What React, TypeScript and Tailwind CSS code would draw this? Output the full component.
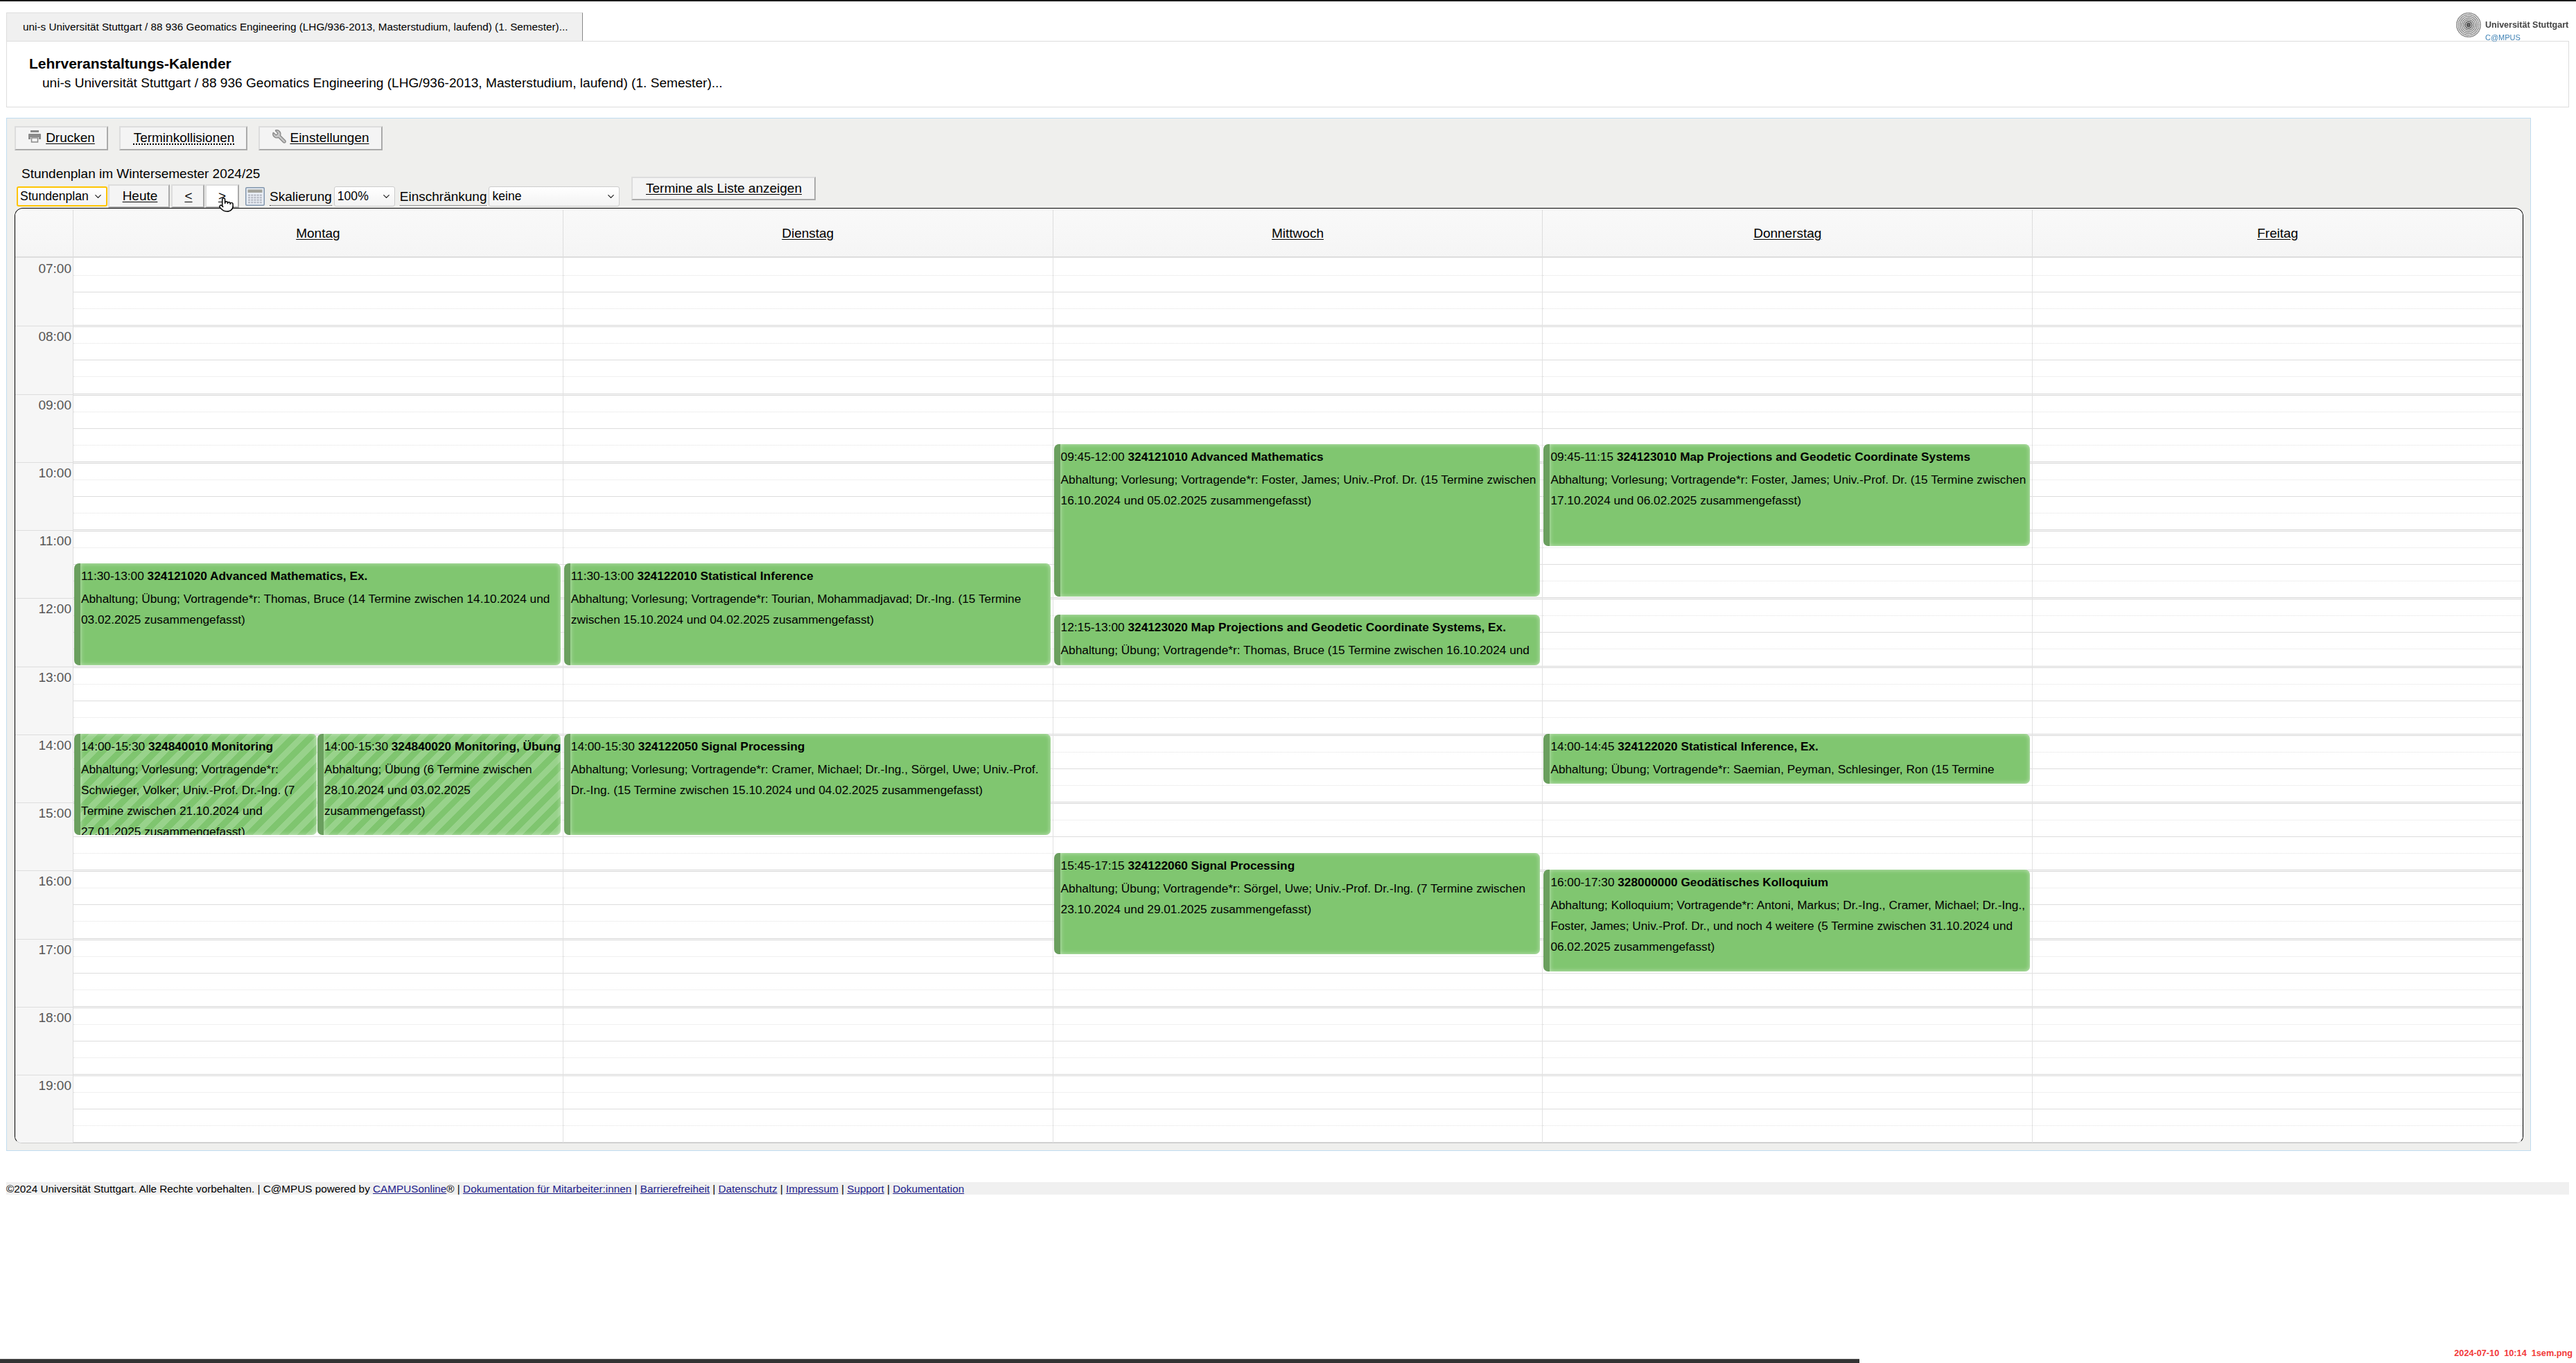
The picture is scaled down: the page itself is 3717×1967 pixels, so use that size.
import React from "react";
import { ChevronDown, Pointer, Wrench } from "lucide-react";

/* =====================================================
   DATA
===================================================== */
const HOUR = 98.25;
const hours = ["07:00", "08:00", "09:00", "10:00", "11:00", "12:00", "13:00", "14:00", "15:00", "16:00", "17:00", "18:00", "19:00"];
const days = ["Montag", "Dienstag", "Mittwoch", "Donnerstag", "Freitag"];

type CalEvent = {
  day: number;
  start: number;
  end: number;
  time: string;
  title: string;
  text: string;
  slot?: number;
  slots?: number;
  hatched?: boolean;
};

const events: CalEvent[] = [
  { day: 0, start: 11.5, end: 13, time: "11:30-13:00", title: "324121020 Advanced Mathematics, Ex.", text: "Abhaltung; Übung; Vortragende*r: Thomas, Bruce (14 Termine zwischen 14.10.2024 und 03.02.2025 zusammengefasst)" },
  { day: 0, start: 14, end: 15.5, time: "14:00-15:30", title: "324840010 Monitoring", text: "Abhaltung; Vorlesung; Vortragende*r: Schwieger, Volker; Univ.-Prof. Dr.-Ing. (7 Termine zwischen 21.10.2024 und 27.01.2025 zusammengefasst)", slot: 0, slots: 2, hatched: true },
  { day: 0, start: 14, end: 15.5, time: "14:00-15:30", title: "324840020 Monitoring, Übung", text: "Abhaltung; Übung (6 Termine zwischen 28.10.2024 und 03.02.2025 zusammengefasst)", slot: 1, slots: 2, hatched: true },
  { day: 1, start: 11.5, end: 13, time: "11:30-13:00", title: "324122010 Statistical Inference", text: "Abhaltung; Vorlesung; Vortragende*r: Tourian, Mohammadjavad; Dr.-Ing. (15 Termine zwischen 15.10.2024 und 04.02.2025 zusammengefasst)" },
  { day: 1, start: 14, end: 15.5, time: "14:00-15:30", title: "324122050 Signal Processing", text: "Abhaltung; Vorlesung; Vortragende*r: Cramer, Michael; Dr.-Ing., Sörgel, Uwe; Univ.-Prof. Dr.-Ing. (15 Termine zwischen 15.10.2024 und 04.02.2025 zusammengefasst)" },
  { day: 2, start: 9.75, end: 12, time: "09:45-12:00", title: "324121010 Advanced Mathematics", text: "Abhaltung; Vorlesung; Vortragende*r: Foster, James; Univ.-Prof. Dr. (15 Termine zwischen 16.10.2024 und 05.02.2025 zusammengefasst)" },
  { day: 2, start: 12.25, end: 13, time: "12:15-13:00", title: "324123020 Map Projections and Geodetic Coordinate Systems, Ex.", text: "Abhaltung; Übung; Vortragende*r: Thomas, Bruce (15 Termine zwischen 16.10.2024 und 05.02.2025 zusammengefasst)" },
  { day: 2, start: 15.75, end: 17.25, time: "15:45-17:15", title: "324122060 Signal Processing", text: "Abhaltung; Übung; Vortragende*r: Sörgel, Uwe; Univ.-Prof. Dr.-Ing. (7 Termine zwischen 23.10.2024 und 29.01.2025 zusammengefasst)" },
  { day: 3, start: 9.75, end: 11.25, time: "09:45-11:15", title: "324123010 Map Projections and Geodetic Coordinate Systems", text: "Abhaltung; Vorlesung; Vortragende*r: Foster, James; Univ.-Prof. Dr. (15 Termine zwischen 17.10.2024 und 06.02.2025 zusammengefasst)" },
  { day: 3, start: 14, end: 14.75, time: "14:00-14:45", title: "324122020 Statistical Inference, Ex.", text: "Abhaltung; Übung; Vortragende*r: Saemian, Peyman, Schlesinger, Ron (15 Termine zwischen 17.10.2024 und 06.02.2025 zusammengefasst)" },
  { day: 3, start: 16, end: 17.5, time: "16:00-17:30", title: "328000000 Geodätisches Kolloquium", text: "Abhaltung; Kolloquium; Vortragende*r: Antoni, Markus; Dr.-Ing., Cramer, Michael; Dr.-Ing., Foster, James; Univ.-Prof. Dr., und noch 4 weitere (5 Termine zwischen 31.10.2024 und 06.02.2025 zusammengefasst)" },
];

const footerLinks = ["Dokumentation für Mitarbeiter:innen", "Barrierefreiheit", "Datenschutz", "Impressum", "Support", "Dokumentation"];

/* =====================================================
   SMALL COMPONENTS
===================================================== */
const LogoDots = () => {
  const dots: React.ReactNode[] = [];
  for (let ring = 1; ring <= 7; ring++) {
    const r = ring * 2.45;
    const count = 8 + ring * 6;
    for (let i = 0; i < count; i++) {
      const a = (i / count) * Math.PI * 2 + ring * 0.22;
      dots.push(
        <circle key={`${ring}-${i}`} cx={18 + r * Math.cos(a)} cy={18 + r * Math.sin(a)} r={0.95} fill={ring < 3 ? "#555" : "#777"} />
      );
    }
  }
  return (
    <svg width="36" height="36" viewBox="0 0 36 36">
      <circle cx="18" cy="18" r="3" fill="#666" />
      {dots}
    </svg>
  );
};

const PrinterIcon = () => (
  <svg width="20" height="20" viewBox="0 0 20 20" className="mb-[6px]">
    <rect x="4" y="1" width="12" height="3" fill="#888" />
    <path d="M1 7a1 1 0 0 1 1-1h16a1 1 0 0 1 1 1v7h-3v-3H4v3H1z" fill="#8a8a8a" />
    <rect x="5.5" y="12" width="9" height="6" fill="#f4f4f4" stroke="#8a8a8a" strokeWidth="1.5" />
  </svg>
);

const CalculatorIcon = () => (
  <svg width="28" height="27" viewBox="0 0 28 27" className="shrink-0">
    <rect x="0.75" y="0.75" width="26.5" height="25.5" rx="1.5" fill="#e9eef5" stroke="#8296ad" strokeWidth="1.5" />
    <rect x="3.5" y="3.5" width="21" height="4.5" fill="#a3a39b" />
    {[0, 1, 2, 3].map((row) =>
      [0, 1, 2, 3, 4].map((col) => (
        <rect key={`${row}-${col}`} x={4 + col * 4.2} y={10.5 + row * 3.5} width="3" height="2.4" fill="#b8bcc6" />
      ))
    )}
  </svg>
);

const Button = ({ children, className = "" }: { children: React.ReactNode; className?: string }) => (
  <div className={`flex items-center justify-center border-2 border-t-[#dddddd] border-l-[#dddddd] border-r-[#aaaaaa] border-b-[#aaaaaa] ${className}`}>
    {children}
  </div>
);

const SelectBox = ({ label, className = "" }: { label: string; className?: string }) => (
  <div className={`flex items-center justify-between h-[29px] rounded-[3px] bg-gradient-to-b from-white to-[#f3f3f3] text-[17.6px] ${className}`}>
    <span>{label}</span>
    <ChevronDown size={15} strokeWidth={2} className="shrink-0 text-[#222]" />
  </div>
);

const EventCard = ({ ev }: { ev: CalEvent }) => {
  const slots = ev.slots ?? 1;
  const slot = ev.slot ?? 0;
  return (
    <div
      className={`absolute overflow-hidden rounded-[7px] border-l-[9px] border-[#6a9f5e] pl-[1px] pr-[3px] text-[17.25px] text-black shadow-[inset_0_0_6px_rgba(255,255,255,0.55)] ${
        ev.hatched
          ? "bg-[repeating-linear-gradient(135deg,#7fc56f_0,#7fc56f_9px,#98d28b_9px,#98d28b_18px)]"
          : "bg-[#80c670]"
      }`}
      style={{
        top: (ev.start - 7) * HOUR - 1,
        height: (ev.end - ev.start) * HOUR - 1,
        left: `${(slot / slots) * 100}%`,
        width: `calc(${100 / slots}% - ${slots > 1 && slot === 0 ? 1 : 0}px)`,
      }}
    >
      <div className="pt-[3px] mb-[3px] leading-[30px] whitespace-nowrap">
        {ev.time} <b>{ev.title}</b>
      </div>
      <div className="leading-[30px]">{ev.text}</div>
    </div>
  );
};

const HourRow = () => (
  <div className="flex flex-col h-[98.25px]">
    <div className="flex-1 border-b border-dotted border-[#e2e2e2]" />
    <div className="flex-1 border-b border-[#dddddd]" />
    <div className="flex-1 border-b border-dotted border-[#e2e2e2]" />
    <div className="flex-1 border-b-[3px] border-double border-[#d6d6d6]" />
  </div>
);

/* =====================================================
   MAIN COMPONENT
===================================================== */
export default function App() {
  return (
    <div className="relative flex flex-col min-h-[1967px] bg-white text-black overflow-hidden font-['Liberation_Sans',Arial,sans-serif] text-[19px]">
      {/* top edge */}
      <div className="h-[2px] bg-[#1a1a1a]" />

      {/* logo */}
      <div className="absolute left-[3544px] top-[18px] flex gap-[6px] blur-[0.4px]">
        <LogoDots />
        <div className="pt-[8px]">
          <div className="text-[12.5px] leading-[20px] font-bold text-[#444] whitespace-nowrap">Universität Stuttgart</div>
          <div className="text-[11px] leading-[14px] mt-[1px] text-[#3f82b5]">C@MPUS</div>
        </div>
      </div>

      {/* tab + title */}
      <div className="mt-[16px] ml-[9px] w-[3698px]">
        <div className="flex items-center h-[41px] w-[832px] pl-[23px] bg-[#f0f0f0] border-t border-l border-[#dddddd] border-r border-r-[#888888] text-[15.3px] whitespace-nowrap">
          uni-s Universität Stuttgart / 88 936 Geomatics Engineering (LHG/936-2013, Masterstudium, laufend) (1. Semester)...
        </div>
        <div className="h-[96px] border border-[#dddddd] pl-[32px] pt-[19px]">
          <div className="font-bold text-[21px] leading-[26px]">Lehrveranstaltungs-Kalender</div>
          <div className="pl-[19px] text-[19.1px] leading-[28px] mt-[1px]">
            uni-s Universität Stuttgart / 88 936 Geomatics Engineering (LHG/936-2013, Masterstudium, laufend) (1. Semester)...
          </div>
        </div>
      </div>

      {/* panel */}
      <div className="mt-[15px] ml-[9px] w-[3643px] h-[1491px] bg-[#efefed] border border-[#c0dcf0] pl-[11px] pt-[11px]">
        <div className="flex gap-[16px] h-[35px]">
          <Button className="w-[135px] h-[35px] gap-[6px] bg-[#f4f4f4]">
            <PrinterIcon />
            <span className="underline underline-offset-2">Drucken</span>
          </Button>
          <Button className="w-[185px] h-[35px] pl-[2px] bg-[#f4f4f4]">
            <span className="underline decoration-dotted underline-offset-2">Terminkollisionen</span>
          </Button>
          <Button className="w-[179px] h-[35px] gap-[4px] bg-[#f4f4f4]">
            <Wrench size={22} strokeWidth={1.5} className="-scale-x-100 mb-[6px] text-[#8a8a8a] fill-[#c8c8c8]" />
            <span className="underline underline-offset-2">Einstellungen</span>
          </Button>
        </div>

        <div className="ml-[10px] mt-[23px] h-[22px] leading-[22px]">Stundenplan im Wintersemester 2024/25</div>

        {/* controls */}
        <div className="relative flex items-start h-[45px] ml-[3px] -mt-[7px] whitespace-nowrap">
          <SelectBox label="Stundenplan" className="mt-[14px] w-[131px] pl-[3px] pr-[4px] border-2 border-[#ffc400]" />
          <Button className="mt-[11px] ml-[1px] w-[89px] h-[34px] pl-[3px] bg-[#f4f4f4]">
            <span className="underline underline-offset-2">Heute</span>
          </Button>
          <Button className="mt-[11px] ml-[2px] w-[48px] h-[34px] pl-[2px] bg-[#f4f4f4]">
            <span className="underline underline-offset-2">&lt;</span>
          </Button>
          <Button className="mt-[11px] ml-[1px] w-[49px] h-[34px] bg-white">
            <span className="underline underline-offset-2">&gt;</span>
          </Button>
          <div className="mt-[15px] ml-[9px]">
            <CalculatorIcon />
          </div>
          <span className="mt-[17px] ml-[7px] leading-[24px] border-b border-dotted border-[#333]">Skalierung</span>
          <SelectBox label="100%" className="mt-[14px] ml-[3px] w-[88px] px-[4px] border border-[#cccccc]" />
          <span className="mt-[17px] ml-[7px] leading-[24px] border-b border-dotted border-[#333]">Einschränkung</span>
          <SelectBox label="keine" className="mt-[14px] ml-[3px] w-[189px] px-[4px] border border-[#cccccc]" />
          <Button className="ml-[17px] w-[266px] h-[34px] bg-[#f4f4f4]">
            <span className="underline underline-offset-2">Termine als Liste anzeigen</span>
          </Button>
          {/* mouse pointer in the screenshot */}
          <Pointer size={23} strokeWidth={1.5} className="absolute left-[291px] top-[29px] text-black fill-white" />
        </div>

        {/* calendar */}
        <div className="w-[3620px] h-[1350px] rounded-t-[12px] rounded-b-[10px] border border-black border-b-[#cccccc] pt-[2px] overflow-hidden bg-white">
          {/* header */}
          <div className="grid grid-cols-[84px_repeat(5,1fr)] h-[69px] bg-gradient-to-b from-[#f9f9f9] to-[#f5f5f5] border-b-2 border-[#dddddd]">
            <div className="border-r border-[#dddddd]" />
            {days.map((d) => (
              <div key={d} className="flex items-center justify-center pt-[1px] border-r border-[#dddddd] last:border-r-0">
                <span className="underline underline-offset-2">{d}</span>
              </div>
            ))}
          </div>

          {/* body */}
          <div className="grid grid-cols-[84px_repeat(5,1fr)]">
            <div className="pt-px bg-[#f6f6f6] border-r border-[#dddddd]">
              {hours.map((h) => (
                <div key={h} className="h-[98.25px] border-b border-[#dddddd] last:border-b-black pr-[2px] pt-[2px] text-right text-[19px] leading-[26px] text-[#555]">
                  {h}
                </div>
              ))}
            </div>
            {days.map((d, i) => (
              <div key={d} className="relative pt-[2px] bg-white border-r border-[#e2e2e2] last:border-r-0">
                {hours.map((h) => (
                  <HourRow key={h} />
                ))}
                <div className="absolute inset-y-0 left-px right-[3px]">
                  {events
                    .filter((ev) => ev.day === i)
                    .map((ev) => (
                      <EventCard key={ev.title} ev={ev} />
                    ))}
                </div>
              </div>
            ))}
          </div>
        </div>
      </div>

      {/* footer */}
      <div className="mt-[45px] ml-[9px] w-[3698px] h-[18px] bg-[#f0f0f0] text-[15.3px] leading-[19px] whitespace-nowrap">
        ©2024 Universität Stuttgart. Alle Rechte vorbehalten. | C@MPUS powered by{" "}
        <span className="text-[#22228c] underline">CAMPUSonline</span>®
        {footerLinks.map((l) => (
          <React.Fragment key={l}>
            {" "}| <span className="text-[#22228c] underline">{l}</span>
          </React.Fragment>
        ))}
      </div>

      {/* bottom edge */}
      <div className="mt-auto w-[2683px] h-[6px] bg-[#333333] border-t border-[#555555]" />
      <div className="absolute right-[5px] bottom-[5px] text-[12.7px] leading-[18px] font-bold text-[#f23a3a] whitespace-pre">2024-07-10  10:14  1sem.png</div>
    </div>
  );
}
